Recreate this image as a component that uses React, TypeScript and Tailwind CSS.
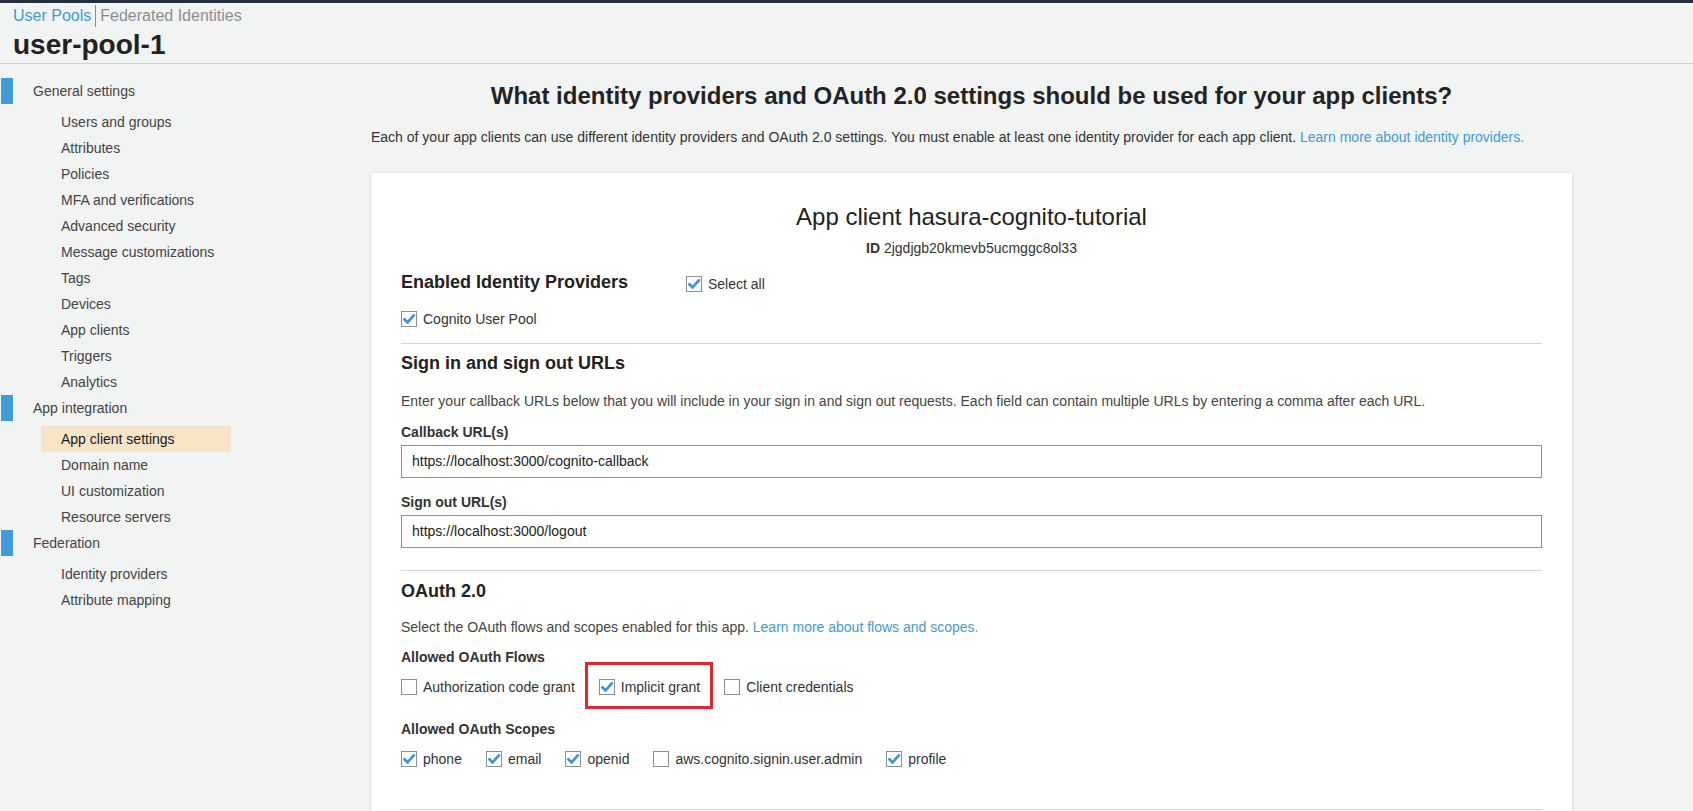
import React from "react";

const Check = ({ checked }: { checked: boolean }) => (
  <span className="flex h-[16px] w-[16px] shrink-0 items-center justify-center border border-[#879196] bg-white">
    {checked && (
      <svg width="14" height="14" viewBox="0 0 14 14">
        <path d="M2.4 7.2 L5.6 10.4 L11.8 3.4" fill="none" stroke="#3f95d8" strokeWidth="2.8" strokeLinecap="round" strokeLinejoin="round" />
      </svg>
    )}
  </span>
);

const CheckItem = ({ checked, label }: { checked: boolean; label: string }) => (
  <span className="flex h-[20px] items-center gap-[6px] text-[14px] leading-[20px] text-[#333]">
    <Check checked={checked} />
    <span>{label}</span>
  </span>
);

const groups: { title: string; items: string[] }[] = [
  {
    title: "General settings",
    items: [
      "Users and groups",
      "Attributes",
      "Policies",
      "MFA and verifications",
      "Advanced security",
      "Message customizations",
      "Tags",
      "Devices",
      "App clients",
      "Triggers",
      "Analytics",
    ],
  },
  {
    title: "App integration",
    items: ["App client settings", "Domain name", "UI customization", "Resource servers"],
  },
  { title: "Federation", items: ["Identity providers", "Attribute mapping"] },
];

export default function App() {
  return (
    <div className="min-h-screen bg-[#f2f3f3] font-['Liberation_Sans',Arial,sans-serif] text-[#333]">
      <div className="h-[3px] bg-[#232f3e]" />
      <header className="border-b border-[#cfd2d2] px-[13px] pt-[1px] pb-[3px]">
        <div className="flex h-[24px] items-center text-[16px] leading-[24px]">
          <span className="text-[#419bd9]">User Pools</span>
          <span className="mx-[4px] h-[22px] w-px bg-[#8d8d8d]" />
          <span className="text-[#8a8f94]">Federated Identities</span>
        </div>
        <h1 className="mt-[2px] text-[28px] font-bold leading-[30px] text-[#222]">user-pool-1</h1>
      </header>
      <div className="flex">
        <nav className="w-[250px] shrink-0 pt-[14px] text-[14px] text-[#444]">
          {groups.map((g) => (
            <div key={g.title}>
              <div className="flex h-[26px] items-center">
                <span className="ml-[1px] h-[26px] w-[12px] bg-[#419bd9]" />
                <span className="ml-[20px]">{g.title}</span>
              </div>
              <div className="mt-[5px]">
                {g.items.map((it) => (
                  <div
                    key={it}
                    className={
                      it === "App client settings"
                        ? "ml-[41px] flex h-[26px] w-[190px] items-center bg-[#f8e4c6] pl-[20px] text-[#16191f]"
                        : "ml-[41px] flex h-[26px] w-[190px] items-center pl-[20px]"
                    }
                  >
                    {it}
                  </div>
                ))}
              </div>
            </div>
          ))}
        </nav>
        <main className="flex-1 px-[121px] pt-[18px]">
          <h2 className="text-center text-[24px] font-bold leading-[28px] text-[#232323]">
            What identity providers and OAuth 2.0 settings should be used for your app clients?
          </h2>
          <p className="mt-[17px] text-[14px] leading-[20px] text-[#333]">
            Each of your app clients can use different identity providers and OAuth 2.0 settings. You must enable at least one identity provider for each app client.{" "}
            <span className="text-[#419bd9]">Learn more about identity providers.</span>
          </p>
          <section className="mt-[26px] bg-white px-[30px] pt-[30px] pb-[60px] shadow-[0_1px_3px_rgba(0,0,0,0.18)]">
            <div className="text-center text-[24px] leading-[28px] text-[#222]">App client hasura-cognito-tutorial</div>
            <div className="mt-[7px] text-center text-[14px] leading-[20px] text-[#333]">
              <span className="font-bold">ID</span> 2jgdjgb20kmevb5ucmggc8ol33
            </div>
            <div className="mt-[12px] flex h-[24px] items-center">
              <span className="w-[285px] text-[18px] font-bold leading-[24px] text-[#222]">Enabled Identity Providers</span>
              <span className="mt-[4px] flex">
                <CheckItem checked label="Select all" />
              </span>
            </div>
            <div className="mt-[15px] flex">
              <CheckItem checked label="Cognito User Pool" />
            </div>
            <div className="mt-[14px] border-t border-[#d5d7d7]" />
            <div className="mt-[7px] text-[18px] font-bold leading-[24px] text-[#222]">Sign in and sign out URLs</div>
            <div className="mt-[16px] text-[14px] leading-[20px] text-[#444]">
              Enter your callback URLs below that you will include in your sign in and sign out requests. Each field can contain multiple URLs by entering a comma after each URL.
            </div>
            <div className="mt-[11px] text-[14px] font-bold leading-[20px] text-[#333]">Callback URL(s)</div>
            <div className="mt-[3px] flex h-[33px] items-center border border-[#879196] pl-[10px] text-[14px] text-[#222]">
              https://localhost:3000/cognito-callback
            </div>
            <div className="mt-[14px] text-[14px] font-bold leading-[20px] text-[#333]">Sign out URL(s)</div>
            <div className="mt-[3px] flex h-[33px] items-center border border-[#879196] pl-[10px] text-[14px] text-[#222]">
              https://localhost:3000/logout
            </div>
            <div className="mt-[22px] border-t border-[#d5d7d7]" />
            <div className="mt-[8px] text-[18px] font-bold leading-[24px] text-[#222]">OAuth 2.0</div>
            <div className="mt-[14px] text-[14px] leading-[20px] text-[#444]">
              Select the OAuth flows and scopes enabled for this app.{" "}
              <span className="text-[#419bd9]">Learn more about flows and scopes.</span>
            </div>
            <div className="mt-[10px] text-[14px] font-bold leading-[20px] text-[#333]">Allowed OAuth Flows</div>
            <div className="mt-[10px] flex items-center gap-[24px]">
              <CheckItem checked={false} label="Authorization code grant" />
              <span className="relative flex">
                <CheckItem checked label="Implicit grant" />
                <span className="absolute -top-[15px] -right-[13px] -bottom-[12px] -left-[14px] border-[3px] border-[#e2262e]" />
              </span>
              <CheckItem checked={false} label="Client credentials" />
            </div>
            <div className="mt-[22px] text-[14px] font-bold leading-[20px] text-[#333]">Allowed OAuth Scopes</div>
            <div className="mt-[10px] flex items-center gap-[24px]">
              <CheckItem checked label="phone" />
              <CheckItem checked label="email" />
              <CheckItem checked label="openid" />
              <CheckItem checked={false} label="aws.cognito.signin.user.admin" />
              <CheckItem checked label="profile" />
            </div>
            <div className="mt-[40px] border-t border-[#d5d7d7]" />
          </section>
        </main>
      </div>
    </div>
  );
}
